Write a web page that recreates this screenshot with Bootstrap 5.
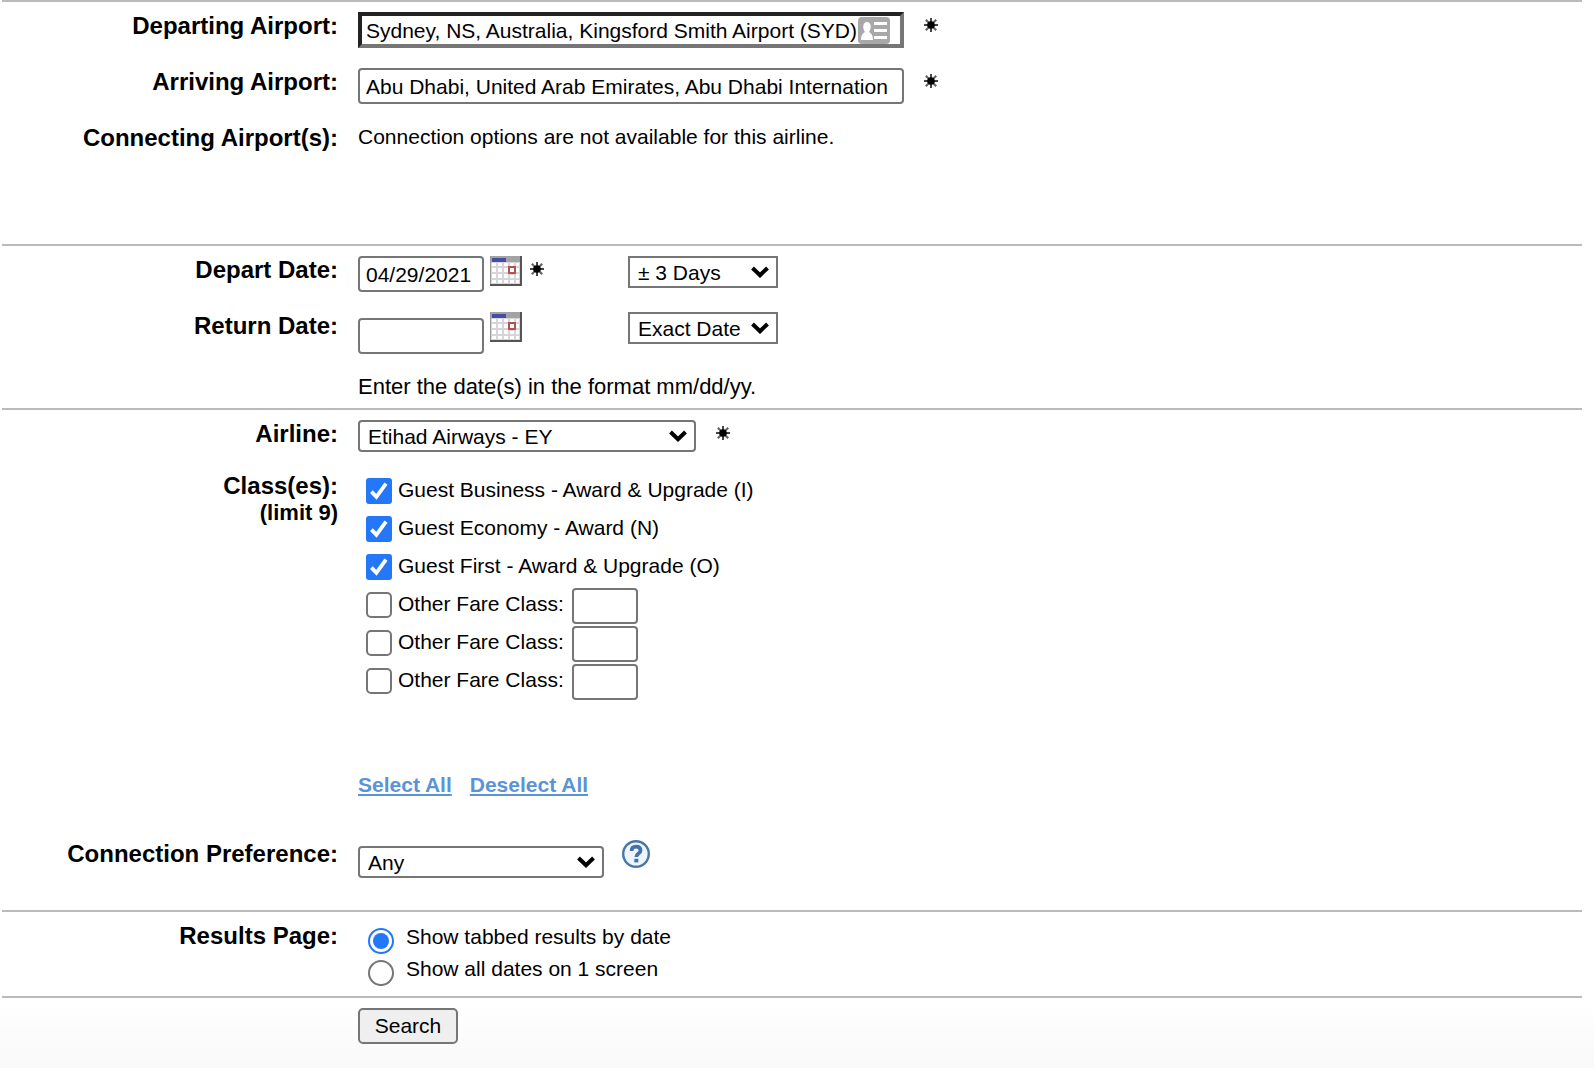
<!DOCTYPE html>
<html lang="en">
<head>
<meta charset="utf-8">
<meta name="viewport" content="width=device-width, initial-scale=1">
<title>Award and Upgrade Search</title>
<link href="https://cdn.jsdelivr.net/npm/bootstrap@5.3.0/dist/css/bootstrap.min.css" rel="stylesheet">
<style>
body { font: 21px/26px "Liberation Sans", Arial, sans-serif; color: #000; background: #fff; }
.search-form { min-height: 100vh; padding: 0 12px 24px 2px; background: linear-gradient(to top, #f8f8f8, #fff 72px); }
.band { border-top: 2px solid #bbb; padding: 10px 0 8px; }
.band-airports { padding-bottom: 64px; }
.band-airline { padding-bottom: 32px; }
.line { display: flex; align-items: flex-start; gap: 20px; min-height: 56px; }
.line-class { min-height: 52px; }
.line-return { min-height: 62px; }
.line-fit { min-height: 0; }
.caption { flex: 0 0 336px; text-align: right; font-size: 24px; line-height: 28px; font-weight: 700; }
.caption-note { display: block; font-size: 22px; line-height: 26px; }
.date-hint { font-size: 22px; }
.form-control, .form-select { font-size: 21px; line-height: 26px; color: #000; background-color: #fff; border: 2px solid #767676; border-radius: 4px; }
.form-control { height: 36px; padding: 2px 6px 0; }
.form-select { height: 32px; padding: 2px 28px 0 8px;
  background-image: url("data:image/svg+xml,%3csvg xmlns='http://www.w3.org/2000/svg' viewBox='0 0 18 12'%3e%3cpath d='M1.5 2 9 9.2 16.5 2' fill='none' stroke='%23000' stroke-width='4'/%3e%3c/svg%3e");
  background-size: 18px 12px; background-position: right 7px center; }
.airport-box { width: 546px; }
.airport-picked { border-width: 4px; border-color: #222 #767676 #767676 #222; border-radius: 0; padding: 2px 4px 0;
  background: #fff url("data:image/svg+xml,%3csvg xmlns='http://www.w3.org/2000/svg' viewBox='0 0 32 27'%3e%3crect width='32' height='27' rx='4' fill='%23a8a8a8'/%3e%3cpath d='M3 23c0-5 2-7 4-8-3-4-2-10 2-10s5 6 2 10c2 1 4 3 4 8zM16 5h13v3H16zM16 12h13v3H16zM16 19h13v3H16z' fill='%23fff'/%3e%3c/svg%3e") no-repeat right 10px center / 32px 27px; }
.date-box { width: 126px; }
.return-box { margin-top: 6px; }
.fare-box { width: 66px; }
.shift-pick { width: 150px; border-radius: 0; }
.airline-pick { width: 338px; }
.connection-pick { width: 246px; margin-top: 6px; }
.date-cell { display: flex; align-items: flex-start; width: 270px; }
.star { flex: none; width: 14px; height: 14px; margin: 6px 0 0 20px; }
.date-cell .star { margin-left: 8px; }
.cal-btn { flex: none; display: flex; padding: 0; border: 0; background: none; margin-left: 6px; }
.help-btn { display: flex; padding: 0; border: 0; background: none; margin-left: 18px; }
.choices { margin: 2px 0 70px 8px; }
.choice { display: flex; align-items: flex-start; height: 38px; }
.choice label { margin: 3px 8px 0 6px; }
.form-check-input { flex: none; width: 26px; height: 26px; margin: 4px 0 0; border: 2px solid #767676; background-color: #fff; }
.form-check-input[type=checkbox] { border-radius: 5px; }
.form-check-input:checked { border-color: #2577f9; }
.form-check-input[type=checkbox]:checked { background-color: #2577f9; border-radius: 3px;
  background-image: url("data:image/svg+xml,%3csvg xmlns='http://www.w3.org/2000/svg' viewBox='0 0 22 22'%3e%3cpath d='M3.4 11.6 8.4 16.8 18 3.6' fill='none' stroke='%23fff' stroke-width='3.8'/%3e%3c/svg%3e"); }
.form-check-input[type=radio]:checked { background-color: #fff;
  background-image: url("data:image/svg+xml,%3csvg xmlns='http://www.w3.org/2000/svg' viewBox='0 0 22 22'%3e%3ccircle cx='11' cy='11' r='8' fill='%232577f9'/%3e%3c/svg%3e"); }
.result-modes { margin: 2px 0 0 10px; }
.result-mode { display: flex; align-items: flex-start; gap: 12px; height: 32px; }
.pick-links { display: flex; gap: 18px; margin-bottom: 42px; }
.pick-link { color: #5b94d6; font-weight: 700; text-decoration-thickness: 2px; text-underline-offset: 2px; }
.search-btn { margin-left: 356px; width: 100px; height: 36px; padding: 0; font-size: 21px; line-height: 26px; color: #000; background: #efefef; border: 2px solid #767676; border-radius: 5px; }
</style>
</head>
<body>
<svg class="d-none" xmlns="http://www.w3.org/2000/svg">
  <symbol id="icon-star" viewBox="0 0 14 14">
    <path d="M7 0v14M0 7h14" stroke="#444" stroke-width="2"/>
    <path d="M1.800 1.800l10.400 10.400M12.200 1.800l-10.400 10.400" stroke="#666" stroke-width="2.200"/>
    <circle cx="7" cy="7" r="3.800" fill="#000"/>
  </symbol>
  <symbol id="icon-calendar" viewBox="0 0 32 30">
    <path fill="#d8d5da" d="M0 0h32v30H0z"/>
    <path fill="#a3a3a3" d="M0 0h32v6H0z"/>
    <path fill="#464ea4" d="M2 2h14v4H2z"/>
    <path fill="#fff" d="M2 7h4v3H2zM8 7h4v3H8zM14 7h4v3h-4zM20 7h4v3h-4zM26 7h3v3h-3zM2 12h4v4H2zM8 12h4v4H8zM14 12h4v4h-4zM26 12h3v4h-3zM2 18h4v4H2zM8 18h4v4H8zM14 18h4v4h-4zM20 19h4v3h-4zM26 18h3v4h-3zM2 24h4v3H2zM8 24h4v3H8zM14 24h4v3h-4zM20 24h4v3h-4zM26 24h3v3h-3z"/>
    <path fill="#fff" stroke="#b0544f" stroke-width="2" d="M19 11h6v6h-6z"/>
    <path fill="none" stroke="#999" d="M.5 0v29"/>
    <path fill="none" stroke="#555" stroke-width="2" d="M0 29h31V0"/>
  </symbol>
</svg>
<form class="search-form" onsubmit="return false">
  <section class="band band-airports">
    <div class="line">
      <label class="caption" for="from">Departing Airport:</label>
      <div class="d-flex">
        <input class="form-control airport-box airport-picked" id="from" type="text" value="Sydney, NS, Australia, Kingsford Smith Airport (SYD)">
        <svg class="star" role="img" aria-label="Required"><use href="#icon-star"/></svg>
      </div>
    </div>
    <div class="line">
      <label class="caption" for="to">Arriving Airport:</label>
      <div class="d-flex">
        <input class="form-control airport-box" id="to" type="text" value="Abu Dhabi, United Arab Emirates, Abu Dhabi Internation">
        <svg class="star" role="img" aria-label="Required"><use href="#icon-star"/></svg>
      </div>
    </div>
    <div class="line">
      <div class="caption">Connecting Airport(s):</div>
      <div>Connection options are not available for this airline.</div>
    </div>
  </section>

  <section class="band">
    <div class="line">
      <label class="caption" for="depart">Depart Date:</label>
      <div class="d-flex">
        <div class="date-cell">
          <input class="form-control date-box" id="depart" type="text" value="04/29/2021">
          <button class="cal-btn" type="button" aria-label="Choose depart date"><svg width="32" height="30"><use href="#icon-calendar"/></svg></button>
          <svg class="star" role="img" aria-label="Required"><use href="#icon-star"/></svg>
        </div>
        <select class="form-select shift-pick" aria-label="Depart date range"><option>± 3 Days</option><option>Exact Date</option></select>
      </div>
    </div>
    <div class="line line-return">
      <label class="caption" for="return">Return Date:</label>
      <div class="d-flex align-items-start">
        <div class="date-cell">
          <input class="form-control date-box return-box" id="return" type="text">
          <button class="cal-btn" type="button" aria-label="Choose return date"><svg width="32" height="30"><use href="#icon-calendar"/></svg></button>
        </div>
        <select class="form-select shift-pick" aria-label="Return date range"><option>Exact Date</option><option>± 3 Days</option></select>
      </div>
    </div>
    <div class="line line-fit">
      <div class="caption"></div>
      <div class="date-hint">Enter the date(s) in the format mm/dd/yy.</div>
    </div>
  </section>

  <section class="band band-airline">
    <div class="line line-class">
      <label class="caption" for="airline">Airline:</label>
      <div class="d-flex">
        <select class="form-select airline-pick" id="airline"><option>Etihad Airways - EY</option></select>
        <svg class="star" role="img" aria-label="Required"><use href="#icon-star"/></svg>
      </div>
    </div>
    <div class="line line-fit">
      <div class="caption">Class(es):<span class="caption-note">(limit 9)</span></div>
      <div>
        <div class="choices">
          <div class="choice"><input class="form-check-input" type="checkbox" id="c1" checked><label for="c1">Guest Business - Award &amp; Upgrade (I)</label></div>
          <div class="choice"><input class="form-check-input" type="checkbox" id="c2" checked><label for="c2">Guest Economy - Award (N)</label></div>
          <div class="choice"><input class="form-check-input" type="checkbox" id="c3" checked><label for="c3">Guest First - Award &amp; Upgrade (O)</label></div>
          <div class="choice"><input class="form-check-input" type="checkbox" id="c4"><label for="c4">Other Fare Class:</label><input class="form-control fare-box" type="text" aria-label="Other fare class 1"></div>
          <div class="choice"><input class="form-check-input" type="checkbox" id="c5"><label for="c5">Other Fare Class:</label><input class="form-control fare-box" type="text" aria-label="Other fare class 2"></div>
          <div class="choice"><input class="form-check-input" type="checkbox" id="c6"><label for="c6">Other Fare Class:</label><input class="form-control fare-box" type="text" aria-label="Other fare class 3"></div>
        </div>
        <div class="pick-links"><a class="pick-link" href="#">Select All</a><a class="pick-link" href="#">Deselect All</a></div>
      </div>
    </div>
    <div class="line line-fit">
      <label class="caption" for="connection">Connection Preference:</label>
      <div class="d-flex align-items-start">
        <select class="form-select connection-pick" id="connection"><option>Any</option></select>
        <button class="help-btn" type="button" aria-label="Help">
          <svg width="28" height="28" viewBox="0 0 28 28"><circle cx="14" cy="14" r="12.8" fill="#eef4fb" stroke="#4a76a8" stroke-width="2.4"/><path d="M9.600 11c0-3 1.900-4.300 4.500-4.300s4.400 1.300 4.400 3.700c0 3-4.200 3.200-4.200 6.600" fill="none" stroke="#4472a8" stroke-width="3.800"/><path d="M12.300 18.800h4v3.600h-4z" fill="#4472a8"/></svg>
        </button>
      </div>
    </div>
  </section>

  <section class="band">
    <div class="line line-fit">
      <div class="caption">Results Page:</div>
      <div class="result-modes">
        <div class="result-mode"><input class="form-check-input" type="radio" name="mode" id="tabbed" checked><label for="tabbed">Show tabbed results by date</label></div>
        <div class="result-mode"><input class="form-check-input" type="radio" name="mode" id="single"><label for="single">Show all dates on 1 screen</label></div>
      </div>
    </div>
  </section>

  <section class="band">
    <button class="btn search-btn" type="submit">Search</button>
  </section>
</form>
<script src="https://cdn.jsdelivr.net/npm/bootstrap@5.3.0/dist/js/bootstrap.bundle.min.js"></script>
</body>
</html>
